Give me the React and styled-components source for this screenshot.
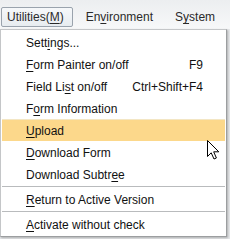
import React from "react";
import styled, { createGlobalStyle } from "styled-components";

const Global = createGlobalStyle`
  html, body { margin: 0; padding: 0; }
  body {
    background: #e6e8ea;
    font-family: "Liberation Sans", Arial, sans-serif;
    font-size: 12px;
    width: 230px;
    height: 239px;
    overflow: hidden;
  }
`;

const Page = styled.div`
  position: relative;
  width: 230px;
  height: 239px;
`;

const MenuBar = styled.div`
  display: flex;
  gap: 7px;
  height: 29px;
  box-sizing: border-box;
  padding: 7px 0 0 1px;
  background: linear-gradient(#eceef0, #f7f8f9);
`;

const BarItem = styled.div`
  height: 20px;
  box-sizing: border-box;
  display: flex;
  align-items: center;
  padding: 0 8px 0 5px;
  border: 1px solid ${(p) => (p.$open ? "#9aa3ad" : "transparent")};
  border-radius: 2px;
  background: ${(p) =>
    p.$open ? "linear-gradient(#f6f8fa, #e7ecf0)" : "transparent"};
  color: #2a2a2a;
  white-space: nowrap;
`;

const Menu = styled.div`
  width: 227px;
  box-sizing: border-box;
  background: #ffffff;
  border: 1px solid #c4c6c8;
  border-right-color: #9c9ea0;
  border-bottom-color: #9c9ea0;
  box-shadow: 1px 1px 2px rgba(0, 0, 0, 0.25);
  padding: 1px;
  display: flex;
  flex-direction: column;
`;

const Item = styled.div`
  height: 22px;
  box-sizing: border-box;
  display: flex;
  align-items: center;
  justify-content: space-between;
  padding: 0 22px 0 24px;
  color: #111;
  white-space: nowrap;
  background: ${(p) => (p.$active ? "#fcd88b" : "transparent")};
  border-top: 1px solid ${(p) => (p.$active ? "#f3e6c4" : "transparent")};
`;

const Separator = styled.div`
  height: 1px;
  margin: 1px 0;
  background: #b9bbbd;
`;

const Key = styled.u`
  text-decoration: underline;
  text-underline-offset: 2px;
`;

const Shortcut = styled.span`
  color: #111;
`;

const Cursor = styled.svg`
  position: absolute;
  left: 206px;
  top: 139px;
`;

function Label({ text, k }) {
  if (k == null) return <span>{text}</span>;
  return (
    <span>
      {text.slice(0, k)}
      <Key>{text[k]}</Key>
      {text.slice(k + 1)}
    </span>
  );
}

const items = [
  { text: "Settings...", k: 4 },
  { text: "Form Painter on/off", k: 0, sc: "F9" },
  { text: "Field List on/off", k: 8, sc: "Ctrl+Shift+F4" },
  { text: "Form Information", k: 1 },
  { text: "Upload", k: 0, active: true },
  { text: "Download Form", k: 0 },
  { text: "Download Subtree", k: 14, sepAfter: true },
  { text: "Return to Active Version", k: 0, sepAfter: true },
  { text: "Activate without check", k: 0 },
];

export default function App() {
  return (
    <Page>
      <Global />
      <MenuBar>
        <BarItem $open>
          <span>
            Utilities(<Key>M</Key>)
          </span>
        </BarItem>
        <BarItem>
          <Label text="Environment" k={2} />
        </BarItem>
        <BarItem>
          <Label text="System" k={1} />
        </BarItem>
      </MenuBar>
      <Menu>
        {items.map((it) => (
          <React.Fragment key={it.text}>
            <Item $active={it.active}>
              <Label text={it.text} k={it.k} />
              {it.sc && <Shortcut>{it.sc}</Shortcut>}
            </Item>
            {it.sepAfter && <Separator />}
          </React.Fragment>
        ))}
      </Menu>
      <Cursor width="14" height="22" viewBox="0 0 14 22">
        <path
          d="M1.5 1.5 L1.5 17.5 L5.2 13.8 L8 20 L10.4 19 L7.7 12.8 L12.8 12.8 Z"
          fill="#ffffff"
          stroke="#000000"
          strokeWidth="1"
          strokeLinejoin="miter"
        />
      </Cursor>
    </Page>
  );
}
